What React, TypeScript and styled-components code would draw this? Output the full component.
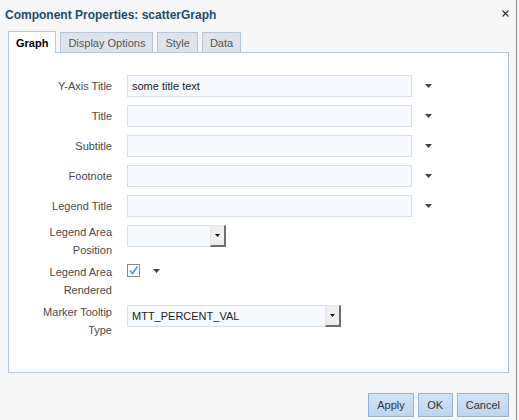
import { Fragment } from "react"
import styled, { createGlobalStyle } from "styled-components"

const Global = createGlobalStyle`
body {
  margin: 0;
  background: #f7f7f7;
  font-family: "Liberation Sans", Arial, sans-serif;
}
`

const Dialog = styled.div`
width: 517px;
height: 420px;
box-sizing: border-box;
background: #f7f7f7;
border-right: 1px solid #8c8c8c;
overflow: hidden;
`

const TitleBar = styled.div`
display: flex;
justify-content: space-between;
align-items: flex-start;
padding: 8px 6px 0 5px;
height: 23px;
`

const Title = styled.h1`
margin: 0;
font-size: 12px;
line-height: 14px;
font-weight: 700;
color: #1f4b6b;
`

const Close = styled.button`
border: 0;
background: none;
padding: 0;
width: 9px;
height: 9px;
margin-top: 1px;
display: flex;
cursor: pointer;
`

const Tabs = styled.div`
display: flex;
align-items: flex-end;
gap: 4px;
height: 21px;
padding-left: 8px;
`

const Tab = styled.div<{ $active?: boolean }>`
box-sizing: border-box;
padding: 0 7px;
font-size: 11px;
border: 1px solid #b5c6d8;
border-bottom: 0;
color: ${p => (p.$active ? "#000" : "#555")};
font-weight: ${p => (p.$active ? 700 : 400)};
background: ${p => (p.$active ? "#fff" : "#dfe4ea")};
height: ${p => (p.$active ? "22px" : "20px")};
line-height: ${p => (p.$active ? "23px" : "21px")};
margin-bottom: ${p => (p.$active ? "-1px" : "0")};
position: relative;
z-index: ${p => (p.$active ? 1 : 0)};
`

const Panel = styled.div`
box-sizing: border-box;
height: 321px;
margin: 0 7px 0 8px;
background: #fff;
border: 1px solid #b5c6d8;
padding-top: 20px;
display: grid;
grid-template-columns: 103px auto;
column-gap: 15px;
row-gap: 4px;
align-content: start;
align-items: start;
`

const Label = styled.div`
min-height: 26px;
display: flex;
align-items: center;
justify-content: flex-end;
text-align: right;
font-size: 11px;
line-height: 18px;
color: #4a4a4a;
`

const Field = styled.div`
display: flex;
align-items: center;
gap: 13px;
padding-top: 2px;
`

const TextInput = styled.div<{ $width: number }>`
box-sizing: border-box;
width: ${p => p.$width}px;
height: 22px;
border: 1px solid #dadfe3;
background: #f6faff;
font-size: 11px;
line-height: 20px;
padding-left: 4px;
color: #222;
`

const Select = styled.div<{ $width: number }>`
box-sizing: border-box;
width: ${p => p.$width}px;
height: 22px;
display: flex;
border: 1px solid #dadfe3;
border-right: 0;
background: #f6faff;
font-size: 11px;
line-height: 20px;
color: #222;
`

const SelectValue = styled.div`
flex: 1;
padding-left: 4px;
`

const SelectButton = styled.div`
box-sizing: border-box;
width: 16px;
height: 22px;
margin-top: -1px;
background: #efefef;
border-top: 1px solid #e6e6e6;
border-left: 1px solid #e6e6e6;
border-right: 2px solid #6e6e6e;
border-bottom: 2px solid #6e6e6e;
display: flex;
align-items: center;
justify-content: center;
`

const Check = styled.div`
box-sizing: border-box;
width: 13px;
height: 13px;
margin-top: -1px;
border: 1px solid #8a8a8a;
background: #fff;
display: flex;
align-items: center;
justify-content: center;
`

const Footer = styled.div`
display: flex;
justify-content: flex-end;
gap: 4px;
padding: 20px 7px 0 0;
`

const Button = styled.button`
height: 24px;
min-width: 35px;
padding: 0 8px;
font-family: "Liberation Sans", Arial, sans-serif;
font-size: 11px;
color: #333;
border: 1px solid #93b3d3;
background: linear-gradient(#d0e3f6, #bcd5ef);
cursor: pointer;
`

function Menu() {
    return (
        <svg width="7" height="4" viewBox="0 0 7 4">
            <polygon points="0,0 7,0 3.5,4" fill="#444" />
        </svg>
    )
}

function SmallArrow() {
    return (
        <svg width="5" height="3" viewBox="0 0 5 3">
            <polygon points="0,0 5,0 2.5,3" fill="#111" />
        </svg>
    )
}

const textRows = [
    { label: "Y-Axis Title", value: "some title text" },
    { label: "Title", value: "" },
    { label: "Subtitle", value: "" },
    { label: "Footnote", value: "" },
    { label: "Legend Title", value: "" },
]

export default function App() {
    return (
        <Dialog>
            <Global />
            <TitleBar>
                <Title>Component Properties: scatterGraph</Title>
                <Close aria-label="Close">
                    <svg width="9" height="9" viewBox="0 0 9 9">
                        <path d="M1.5 1.5 L7.5 7.5 M7.5 1.5 L1.5 7.5" stroke="#333" strokeWidth="1.1" />
                    </svg>
                </Close>
            </TitleBar>
            <Tabs>
                <Tab $active>Graph</Tab>
                <Tab>Display Options</Tab>
                <Tab>Style</Tab>
                <Tab>Data</Tab>
            </Tabs>
            <Panel>
                {textRows.map(r => (
                    <Fragment key={r.label}>
                        <Label>{r.label}</Label>
                        <Field>
                            <TextInput $width={285}>{r.value}</TextInput>
                            <Menu />
                        </Field>
                    </Fragment>
                ))}
                <Label>Legend Area<br />Position</Label>
                <Field>
                    <Select $width={99}>
                        <SelectValue />
                        <SelectButton><SmallArrow /></SelectButton>
                    </Select>
                </Field>
                <Label>Legend Area<br />Rendered</Label>
                <Field>
                    <Check>
                        <svg width="11" height="11" viewBox="0 0 11 11">
                            <path d="M2 5.5 L4.5 8.5 L9.5 1.5" stroke="#4a90d9" strokeWidth="1.6" fill="none" />
                        </svg>
                    </Check>
                    <Menu />
                </Field>
                <Label>Marker Tooltip<br />Type</Label>
                <Field>
                    <Select $width={214}>
                        <SelectValue>MTT_PERCENT_VAL</SelectValue>
                        <SelectButton><SmallArrow /></SelectButton>
                    </Select>
                </Field>
            </Panel>
            <Footer>
                <Button>Apply</Button>
                <Button>OK</Button>
                <Button>Cancel</Button>
            </Footer>
        </Dialog>
    )
}
